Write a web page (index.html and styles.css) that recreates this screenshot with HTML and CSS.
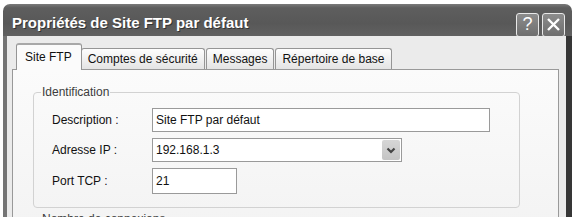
FILE: index.html
```html
<!DOCTYPE html>
<html lang="fr">
<head>
    <meta charset="UTF-8">
    <title>Propriétés de Site FTP par défaut</title>
    <link rel="stylesheet" href="styles.css">
</head>
<body>
    <div class="window">
        <div class="titlebar">
            <span class="title">Propriétés de Site FTP par défaut</span>
            <div class="caption-buttons">
                <span class="cap-btn">?</span>
                <span class="cap-btn">
                    <svg width="15" height="15" viewBox="0 0 15 15"><path d="M2 2 L13 13 M13 2 L2 13" stroke="#fff" stroke-width="2.4" fill="none"/></svg>
                </span>
            </div>
        </div>
        <div class="frame">
            <div class="tabs">
                <div class="tab selected">Site FTP</div>
                <div class="tab">Comptes de sécurité</div>
                <div class="tab">Messages</div>
                <div class="tab">Répertoire de base</div>
            </div>
            <div class="panel">
                <fieldset class="group">
                    <legend>Identification</legend>
                    <div class="row">
                        <label>Description :</label>
                        <div class="field desc">Site FTP par défaut</div>
                    </div>
                    <div class="row">
                        <label>Adresse IP :</label>
                        <div class="field combo">
                            <span>192.168.1.3</span>
                            <span class="drop">
                                <svg width="10" height="7" viewBox="0 0 10 7"><path d="M1.5 1.5 L5 5 L8.5 1.5" stroke="#444" stroke-width="2.2" fill="none"/></svg>
                            </span>
                        </div>
                    </div>
                    <div class="row">
                        <label>Port TCP :</label>
                        <div class="field port">21</div>
                    </div>
                </fieldset>
                <fieldset class="group">
                    <legend>Nombre de connexions</legend>
                </fieldset>
            </div>
        </div>
    </div>
</body>
</html>
```

FILE: styles.css
```css
html, body {
    margin: 0;
    padding: 0;
    background-color: #fff;
    overflow: hidden;
}
body {
    font-family: "Liberation Sans", Arial, sans-serif;
    font-size: 12px;
    color: #111;
}
.window {
    margin: 4px 0 0 3px;
    width: 569px;
    height: 230px;
    border-radius: 7px 7px 0 0;
    overflow: hidden;
    display: flex;
    flex-direction: column;
}
.titlebar {
    height: 32px;
    flex: none;
    background: linear-gradient(to bottom, #7a7a7a 0%, #5e5e5e 12%, #585858 60%, #616161 100%);
    display: flex;
    align-items: center;
    padding: 0 7px 0 9px;
}
.title {
    color: #fff;
    font-weight: bold;
    font-size: 15px;
    padding-top: 4px;
    text-shadow: 1px 1px 0 #333;
}
.caption-buttons {
    margin-left: auto;
    display: flex;
    gap: 3px;
    padding-top: 9px;
}
.cap-btn {
    width: 21px;
    height: 22px;
    border: 1px solid #e8e8e8;
    border-radius: 3px;
    background: linear-gradient(to bottom, #8c8c8c, #6e6e6e);
    color: #fff;
    font-size: 18px;
    display: flex;
    align-items: center;
    justify-content: center;
}
.frame {
    flex: 1;
    background-color: #ebebeb;
    border-left: 4px solid #757575;
    border-right: 6px solid #363636;
    padding: 10px 7px 0 5px;
}
.tabs {
    display: flex;
    align-items: flex-end;
    padding-left: 6px;
    height: 23px;
}
.tab {
    height: 20px;
    padding: 0 6px;
    margin-right: 1px;
    border: 1px solid #959595;
    border-bottom: none;
    border-radius: 3px 3px 0 0;
    background: linear-gradient(to bottom, #fdfdfd, #e4e4e4);
    display: flex;
    align-items: center;
}
.tab.selected {
    height: 23px;
    margin: 0 -1px -1px -2px;
    padding: 0 9px 2px 8px;
    background: #fbfbfb;
    border-top: 2px solid #a8a8a8;
    position: relative;
    z-index: 1;
}
.panel {
    height: 160px;
    border: 1px solid #999;
    background: linear-gradient(to bottom, #fbfbfb, #f3f3f3);
    padding: 0 38px 0 20px;
}
.group {
    margin: 15px 0 0 0;
    padding: 9px 18px 13px 18px;
    border: 1px solid #d2d2d2;
    border-radius: 4px;
}
.group + .group {
    margin-top: 4px;
    height: 40px;
}
.group legend {
    margin-left: -11px;
    padding: 0 1px;
    color: #3c3c3c;
    line-height: 14px;
}
.row {
    display: flex;
    align-items: center;
    margin-bottom: 6px;
}
.row:last-child {
    margin-bottom: 0;
}
.row label {
    width: 100px;
    flex: none;
}
.field {
    height: 22px;
    border: 1px solid #9a9a9a;
    background: #fff;
    padding: 0 3px;
    display: flex;
    align-items: center;
    box-sizing: content-box;
}
.desc {
    width: 330px;
}
.combo {
    width: 244px;
    padding-right: 1px;
}
.combo .drop {
    margin-left: auto;
    width: 18px;
    height: 20px;
    border-radius: 2px;
    background: linear-gradient(to bottom, #d6d6d6, #c4c4c4);
    display: flex;
    align-items: center;
    justify-content: center;
}
.port {
    width: 77px;
    height: 24px;
}
```
